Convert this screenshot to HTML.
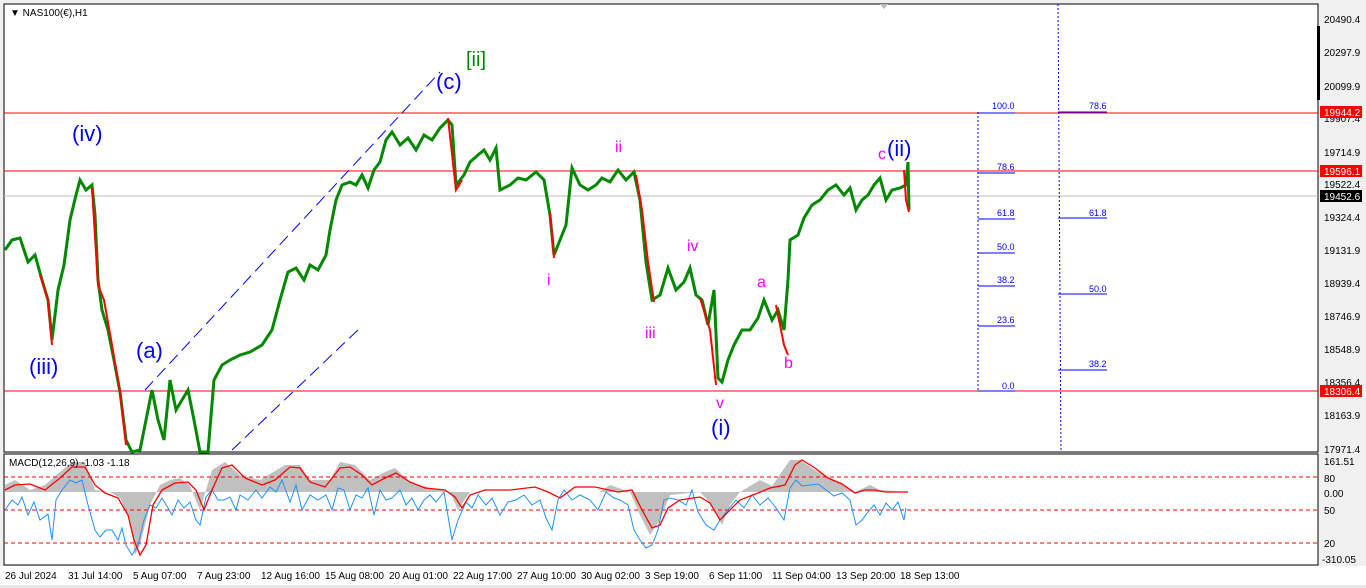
<!DOCTYPE html>
<html><head><meta charset="utf-8"><style>
body{margin:0;background:#fff;width:1366px;height:588px;overflow:hidden;font-family:"Liberation Sans",sans-serif}
svg{display:block}
text{font-family:"Liberation Sans",sans-serif}
</style></head><body>
<svg width="1366" height="588" xmlns="http://www.w3.org/2000/svg">
<rect x="0" y="0" width="1366" height="588" fill="#f0f0f0"/>
<rect x="4" y="4" width="1314" height="448" fill="#fff" stroke="#000" stroke-width="1"/>
<rect x="4" y="454" width="1314" height="111" fill="#fff" stroke="#000" stroke-width="1"/>
<rect x="0" y="566" width="1366" height="22" fill="#fff"/>
<rect x="0" y="585" width="1366" height="3" fill="#e8e8e8"/>
<polygon points="880,4 888,4 884,9" fill="#bbb"/>
<line x1="4" y1="113" x2="1318" y2="113" stroke="#f00"/>
<line x1="4" y1="171" x2="1318" y2="171" stroke="#f00"/>
<line x1="4" y1="196" x2="1318" y2="196" stroke="#bbb"/>
<line x1="4" y1="391" x2="1318" y2="391" stroke="#f00"/>
<line x1="145" y1="390" x2="440" y2="72" stroke="#00f" stroke-dasharray="12,6"/>
<line x1="232" y1="450" x2="360" y2="328" stroke="#00f" stroke-dasharray="12,6"/>
<polyline fill="none" stroke="#080" stroke-width="3" points="5,250 12,240 20,238 28,262 35,255 42,280 48,300 52,340 58,290 64,265 70,220 76,195 80,180 86,190 92,185 95,215 98,280 102,310 108,330 114,360 120,392 126,440 132,452 140,450 146,420 152,390 158,420 164,440 170,380 176,410 182,400 188,390 194,420 200,452 208,452 214,380 222,365 230,360 240,355 250,352 262,345 272,330 280,300 288,272 296,268 304,280 310,265 318,270 326,255 330,230 336,200 342,185 350,182 356,185 362,175 368,188 374,170 380,162 386,140 392,132 400,145 408,138 416,150 424,135 432,140 440,128 448,120 452,125 456,185 464,175 470,162 478,155 484,150 490,160 496,148 500,190 510,185 518,178 526,180 536,172 544,180 550,215 554,255 560,240 566,225 572,168 580,185 588,190 596,185 602,178 610,182 618,170 626,180 634,172 640,200 646,262 652,300 660,295 668,268 676,290 684,282 690,268 696,295 702,300 708,325 714,290 718,378 722,382 728,360 734,345 742,330 750,330 758,318 764,300 772,320 778,310 784,330 788,280 790,240 798,235 804,218 812,205 820,200 828,190 836,185 844,195 850,188 856,210 862,200 868,195 874,185 880,178 886,200 892,190 900,188 906,185 908,162 909,210"/>
<polyline fill="none" stroke="#f00" stroke-width="2" points="92,188 98,285 104,300 112,345 120,392 126,445"/>
<polyline fill="none" stroke="#f00" stroke-width="2" points="40,275 48,300 52,345"/>
<polyline fill="none" stroke="#f00" stroke-width="2" points="448,118 456,190 462,180"/>
<polyline fill="none" stroke="#f00" stroke-width="2" points="550,212 554,258"/>
<polyline fill="none" stroke="#f00" stroke-width="2" points="636,175 642,210 648,262 654,302"/>
<polyline fill="none" stroke="#f00" stroke-width="2" points="700,298 710,330 716,385"/>
<polyline fill="none" stroke="#f00" stroke-width="2" points="776,305 784,345 788,355"/>
<polyline fill="none" stroke="#f00" stroke-width="2" points="904,170 906,200 909,212"/>
<line x1="978" y1="112" x2="978" y2="390" stroke="#00f" stroke-dasharray="2,2"/>
<g stroke="#00f"><line x1="978" y1="113" x2="1015" y2="113"/><line x1="978" y1="173" x2="1015" y2="173"/><line x1="978" y1="219" x2="1015" y2="219"/><line x1="978" y1="253" x2="1015" y2="253"/><line x1="978" y1="286" x2="1015" y2="286"/><line x1="978" y1="326" x2="1015" y2="326"/><line x1="978" y1="391" x2="1015" y2="391"/></g>
<g fill="#00f" font-size="9"><text x="992" y="109">100.0</text><text x="997" y="170">78.6</text><text x="997" y="216">61.8</text><text x="997" y="250">50.0</text><text x="997" y="283">38.2</text><text x="997" y="323">23.6</text><text x="1002" y="389">0.0</text></g>
<line x1="1058" y1="4" x2="1061" y2="452" stroke="#00f" stroke-dasharray="2,2"/>
<g stroke="#00f"><line x1="1058" y1="112" x2="1107" y2="112"/><line x1="1058" y1="218" x2="1107" y2="218"/><line x1="1058" y1="294" x2="1107" y2="294"/><line x1="1058" y1="370" x2="1107" y2="370"/></g>
<g fill="#00f" font-size="9"><text x="1089" y="109">78.6</text><text x="1089" y="216">61.8</text><text x="1089" y="292">50.0</text><text x="1089" y="367">38.2</text></g>
<g fill="#00f" font-size="22"><text x="72" y="141">(iv)</text><text x="29" y="374">(iii)</text><text x="136" y="358">(a)</text><text x="436" y="89">(c)</text><text x="711" y="435">(i)</text><text x="887" y="156">(ii)</text></g>
<text x="466" y="66" fill="#080" font-size="20">[ii]</text>
<g fill="#f0f" font-size="16"><text x="615" y="152">ii</text><text x="547" y="285">i</text><text x="645" y="338">iii</text><text x="687" y="251">iv</text><text x="716" y="408">v</text><text x="757" y="287">a</text><text x="784" y="368">b</text><text x="878" y="159">c</text></g>
<text x="10" y="16" font-size="10">&#9660; NAS100(€),H1</text>
<g font-size="10" fill="#000"><text x="1324" y="23">20490.4</text><text x="1324" y="56">20297.9</text><text x="1324" y="90">20099.9</text><text x="1324" y="122">19907.4</text><text x="1324" y="156">19714.9</text><text x="1324" y="188">19522.4</text><text x="1324" y="221">19324.4</text><text x="1324" y="254">19131.9</text><text x="1324" y="287">18939.4</text><text x="1324" y="320">18746.9</text><text x="1324" y="353">18548.9</text><text x="1324" y="386">18356.4</text><text x="1324" y="419">18163.9</text><text x="1324" y="453">17971.4</text></g>
<rect x="1317" y="26" width="3" height="74" fill="#000"/>
<rect x="1320" y="106" width="42" height="12" fill="#f00"/><text x="1324" y="116" font-size="10" fill="#fff">19944.2</text>
<rect x="1320" y="165" width="42" height="12" fill="#f00"/><text x="1324" y="175" font-size="10" fill="#fff">19596.1</text>
<rect x="1320" y="190" width="42" height="12" fill="#000"/><text x="1324" y="200" font-size="10" fill="#fff">19452.6</text>
<rect x="1320" y="385" width="42" height="12" fill="#f00"/><text x="1324" y="395" font-size="10" fill="#fff">18306.4</text>
<polygon fill="#c0c0c0" points="5,492 5,485 15,480 30,490 45,485 60,472 72,462 85,462 95,490 110,492 120,498 130,520 135,555 140,545 150,505 160,485 170,480 180,478 190,486 200,510 212,470 225,462 240,475 260,480 285,465 300,465 310,480 330,480 340,462 355,465 370,480 385,472 395,468 410,482 430,488 450,492 458,510 470,492 600,492 610,485 630,492 640,515 650,535 660,520 670,495 700,492 712,505 722,525 730,505 740,492 760,480 772,486 790,460 800,460 815,470 830,478 845,485 855,492 870,485 880,490 908,492 908,492 5,492"/>
<line x1="4" y1="477" x2="1318" y2="477" stroke="#f00" stroke-dasharray="4,3"/>
<line x1="4" y1="510" x2="1318" y2="510" stroke="#f00" stroke-dasharray="4,3"/>
<line x1="4" y1="543" x2="1318" y2="543" stroke="#f00" stroke-dasharray="4,3"/>
<polyline fill="none" stroke="#1e90ff" stroke-width="1" points="5,510 12,500 18,505 22,497 28,515 34,502 40,520 48,514 52,540 56,500 62,490 70,480 76,483 82,480 88,505 95,530 100,537 106,530 112,530 118,540 122,528 126,545 132,555 138,545 144,520 150,505 156,508 162,498 168,508 172,515 178,500 184,508 190,502 196,520 200,525 206,497 212,490 218,500 224,500 230,497 236,510 240,495 248,500 256,490 262,498 270,487 276,492 282,480 290,502 296,485 302,510 310,495 318,500 326,495 332,510 338,488 344,490 350,510 356,495 362,498 368,488 374,515 380,490 386,500 392,498 400,490 406,505 412,498 418,510 424,500 430,495 436,502 444,492 452,540 458,520 466,502 472,508 478,495 486,505 492,498 500,515 508,502 516,500 524,495 532,505 540,500 546,518 552,530 558,500 564,490 572,500 580,495 590,500 598,510 606,492 614,498 620,500 628,505 634,530 640,540 646,548 652,545 658,530 664,500 670,498 678,500 686,505 692,490 698,512 706,525 714,530 720,520 728,510 736,500 744,508 752,495 760,505 768,498 776,508 784,520 790,488 796,480 802,486 810,485 818,484 826,490 834,496 842,493 850,500 856,525 862,520 868,512 874,505 880,515 886,503 892,510 898,502 904,520 906,508"/>
<polyline fill="none" stroke="#f00" stroke-width="1.3" points="5,490 15,485 30,484 45,490 60,478 72,467 85,467 95,485 105,493 118,498 128,515 134,540 140,555 146,545 153,505 162,490 175,483 188,482 196,490 204,510 212,490 222,468 232,465 245,478 262,485 275,480 290,467 300,468 310,482 325,487 340,468 350,467 362,475 372,485 385,478 396,473 410,482 425,488 445,490 455,497 462,508 470,495 485,490 510,490 535,487 548,492 560,498 575,487 595,487 618,492 632,490 642,510 652,528 660,525 668,508 680,500 700,497 710,503 720,520 730,510 740,500 758,493 770,488 785,485 795,465 802,460 815,468 828,478 842,484 855,493 865,490 875,490 885,492 908,492"/>
<text x="9" y="466" font-size="10">MACD(12,26,9) -1.03 -1.18</text>
<g font-size="10"><text x="1324" y="465">161.51</text><text x="1324" y="482">80</text><text x="1324" y="497">0.00</text><text x="1324" y="514">50</text><text x="1324" y="547">20</text><text x="1322" y="563">-310.05</text></g>
<g font-size="10"><text x="5" y="579">26 Jul 2024</text><text x="68" y="579">31 Jul 14:00</text><text x="133" y="579">5 Aug 07:00</text><text x="197" y="579">7 Aug 23:00</text><text x="261" y="579">12 Aug 16:00</text><text x="325" y="579">15 Aug 08:00</text><text x="389" y="579">20 Aug 01:00</text><text x="453" y="579">22 Aug 17:00</text><text x="517" y="579">27 Aug 10:00</text><text x="581" y="579">30 Aug 02:00</text><text x="645" y="579">3 Sep 19:00</text><text x="709" y="579">6 Sep 11:00</text><text x="772" y="579">11 Sep 04:00</text><text x="836" y="579">13 Sep 20:00</text><text x="900" y="579">18 Sep 13:00</text></g>
</svg>
</body></html>
